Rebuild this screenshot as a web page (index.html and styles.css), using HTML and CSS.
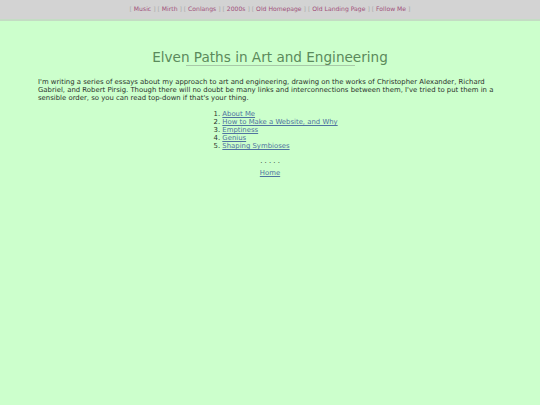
FILE: index.html
```html
<!DOCTYPE html>
<html>
<head>
<meta charset="utf-8">
<link rel="stylesheet" href="styles.css">
</head>
<body>
<div class="topbar">
  <span class="br">[</span> <a href="#">Music</a> <span class="br">] [</span> <a href="#">Mirth</a> <span class="br">] [</span> <a href="#">Conlangs</a> <span class="br">] [</span> <a href="#">2000s</a> <span class="br">] [</span> <a href="#">Old Homepage</a> <span class="br">] [</span> <a href="#">Old Landing Page</a> <span class="br">] [</span> <a href="#">Follow Me</a> <span class="br">]</span>
</div>
<div class="main">
  <h1 class="title">Elven Paths in Art and Engineering</h1>
  <p class="intro">I'm writing a series of essays about my approach to art and engineering, drawing on the works of Christopher Alexander, Richard Gabriel, and Robert Pirsig. Though there will no doubt be many links and interconnections between them, I've tried to put them in a sensible order, so you can read top-down if that's your thing.</p>
  <div class="listwrap">
    <ol class="essays">
      <li><a href="#">About Me</a></li>
      <li><a href="#">How to Make a Website, and Why</a></li>
      <li><a href="#">Emptiness</a></li>
      <li><a href="#">Genius</a></li>
      <li><a href="#">Shaping Symbioses</a></li>
    </ol>
  </div>
  <div class="dots">. . . . .</div>
  <div class="home"><a href="#">Home</a></div>
</div>
</body>
</html>
```
FILE: styles.css
```css
html, body {
  margin: 0;
  padding: 0;
  background: #ccffcc;
  font-family: "DejaVu Sans", Verdana, sans-serif;
  font-size: 6.9px;
  color: #2b332b;
}
.topbar {
  background: #d3d3d3;
  height: 19px;
  line-height: 18px;
  text-align: center;
  border-bottom: 2px solid #c4dcc4;
  color: #a8a8a8;
  font-size: 6.1px;
}
.topbar a {
  color: #a0507a;
  text-decoration: none;
}
.main {
  padding: 0 38px;
}
.title {
  margin: 27px auto 0;
  font-weight: normal;
  font-size: 13.6px;
  color: #5b8a5b;
  text-align: center;
  position: relative;
  width: max-content;
  line-height: 18px;
}
.title::after {
  content: "";
  position: absolute;
  left: 34px;
  right: 33px;
  bottom: 0;
  border-bottom: 1px solid #a8c8a8;
}
.intro {
  margin: 12px 0 0;
  line-height: 8px;
}
.listwrap {
  display: flex;
  justify-content: center;
  margin-top: 8px;
}
.essays {
  margin: 0;
  padding-left: 20px;
  line-height: 8px;
}
.essays a, .home a {
  color: #4f73a0;
}
.dots {
  text-align: center;
  margin-top: 7px;
  line-height: 8px;
}
.home {
  text-align: center;
  margin-top: 4px;
  line-height: 8px;
}
```
